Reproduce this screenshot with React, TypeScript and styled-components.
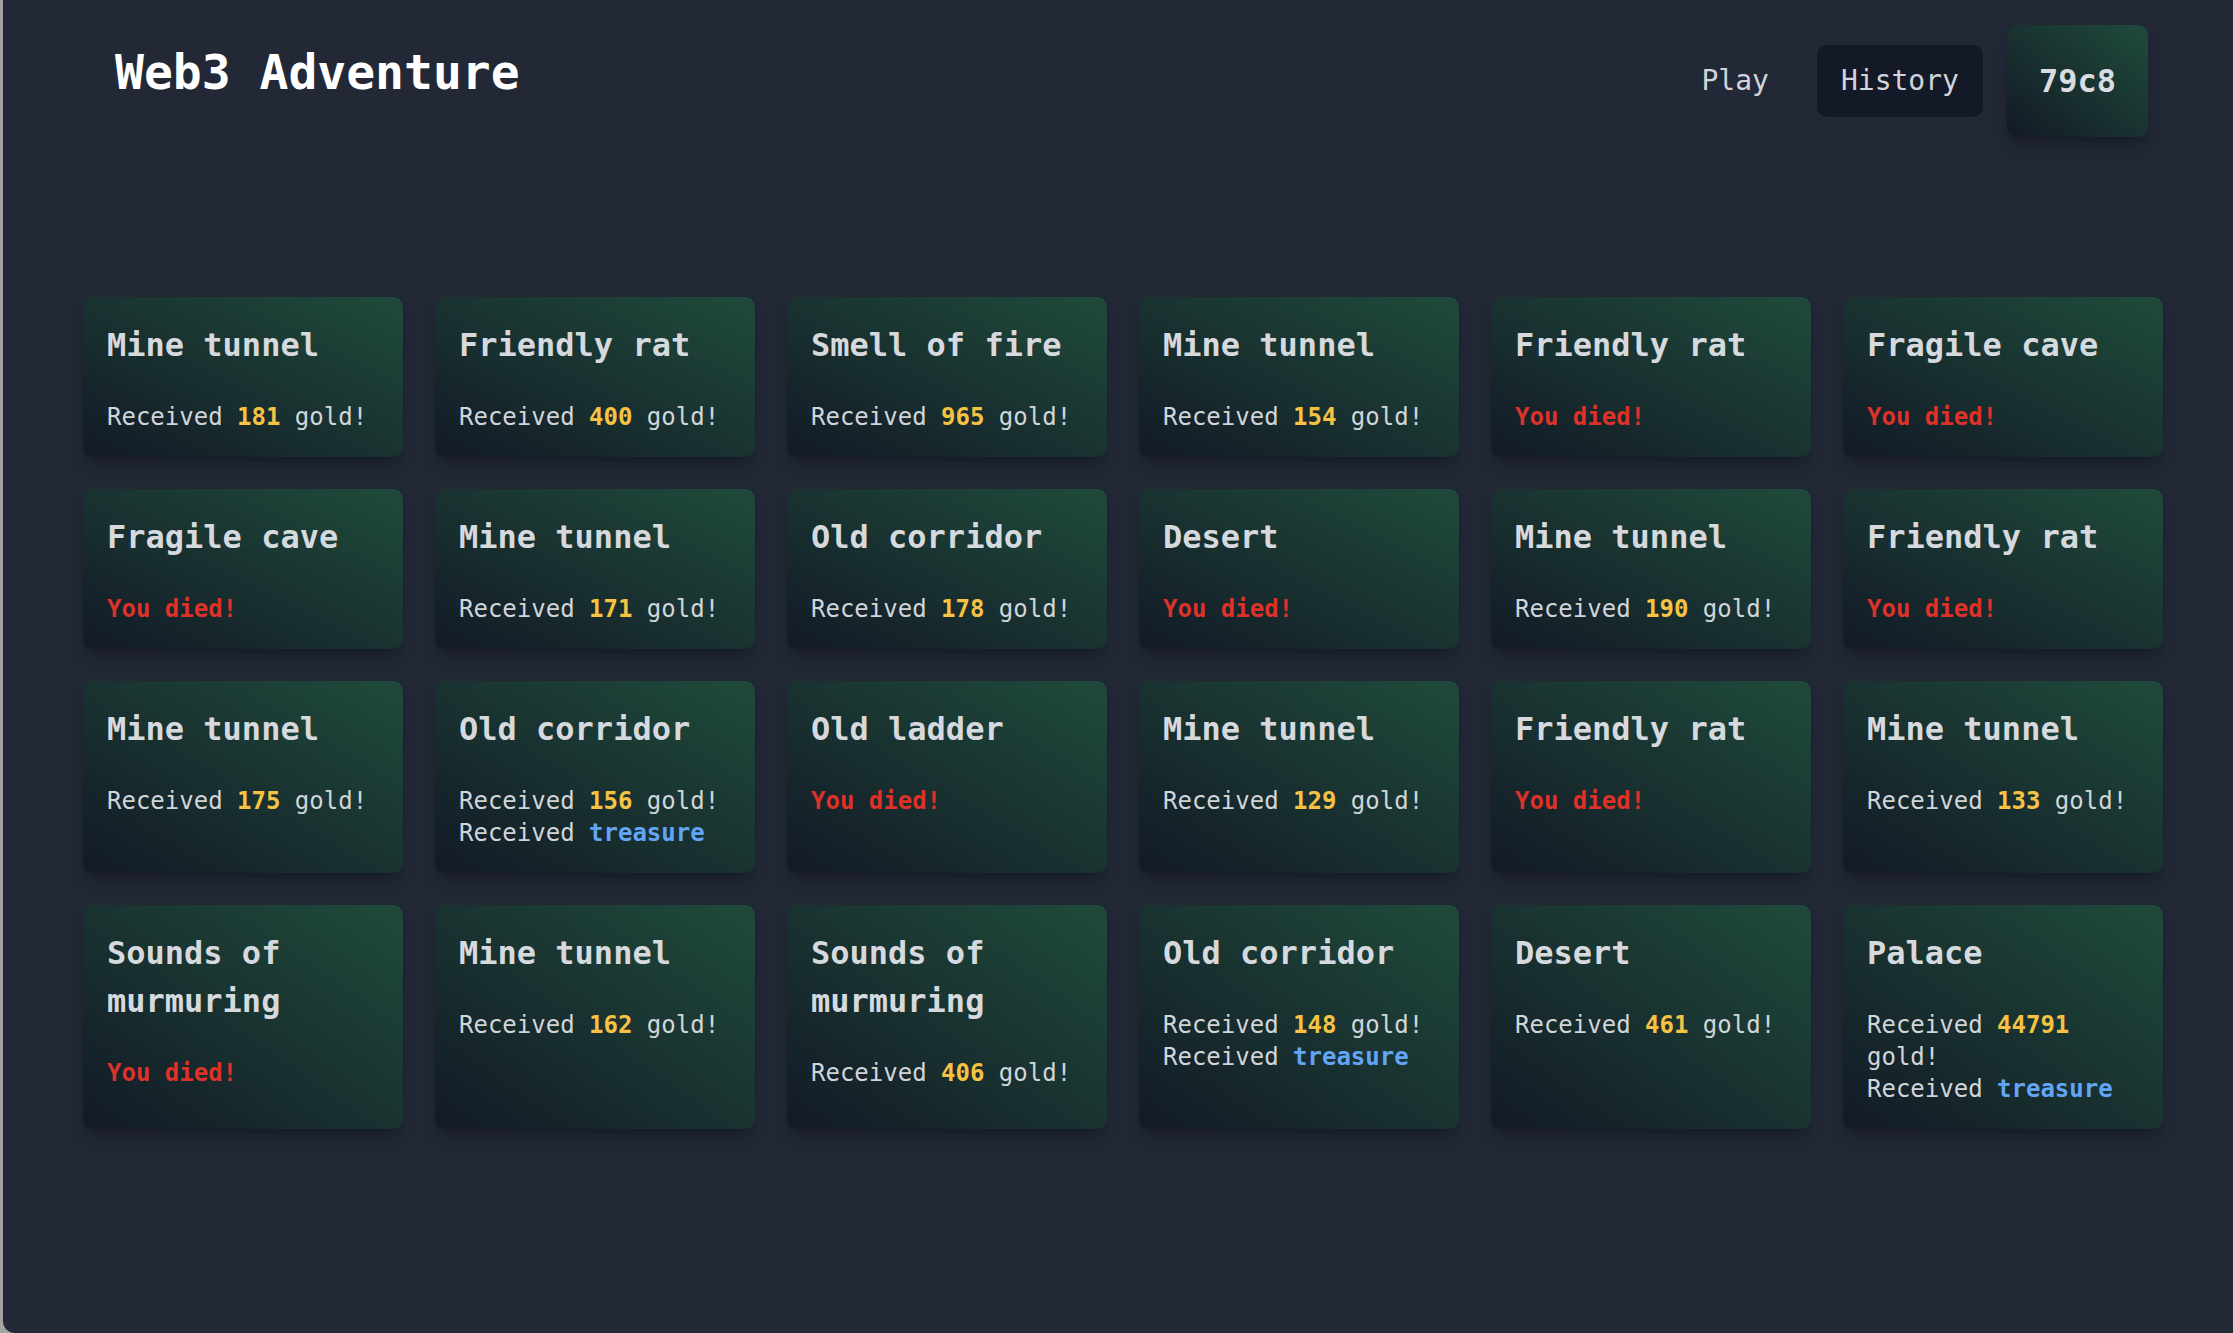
import React from "react";
import styled, { createGlobalStyle } from "styled-components";

const GlobalStyle = createGlobalStyle`
  html, body {
    margin: 0;
    padding: 0;
    background: #a3a3a3;
  }
  body {
    font-family: "DejaVu Sans Mono", "Liberation Mono", monospace;
  }
  * { box-sizing: border-box; }
`;

const Frame = styled.div`
  min-height: 1333px;
  margin-left: 3px;
  background: #222836;
  border-bottom-left-radius: 12px;
  color: #d1d5db;
  padding: 25px 85px 80px 80px;
`;

const Header = styled.header`
  display: flex;
  justify-content: space-between;
  align-items: flex-start;
`;

const Title = styled.h1`
  margin: 19px 0 0 32px;
  font-size: 48px;
  line-height: 1.2;
  font-weight: 700;
  color: #ffffff;
`;

const Nav = styled.nav`
  display: flex;
  align-items: center;
  gap: 24px;
`;

const NavLink = styled.a<{ $active?: boolean }>`
  display: block;
  padding: 15px 24px;
  font-size: 28px;
  line-height: 42px;
  border-radius: 10px;
  color: #d1d5db;
  background: ${(p) => (p.$active ? "#131926" : "transparent")};
  cursor: pointer;
`;

const Account = styled.div`
  padding: 32px;
  font-size: 32px;
  line-height: 48px;
  font-weight: 700;
  color: #d9dce1;
  border-radius: 10px;
  background: linear-gradient(to top right, #131a26, #1f4b3b);
  box-shadow: 0 10px 15px -3px rgba(0, 0, 0, 0.25), 0 4px 6px -4px rgba(0, 0, 0, 0.2);
`;

const Grid = styled.main`
  margin-top: 160px;
  display: grid;
  grid-template-columns: repeat(6, 320px);
  gap: 32px;
`;

const Card = styled.section`
  padding: 24px;
  border-radius: 10px;
  background: linear-gradient(to top right, #131a26, #1f4b3b);
  box-shadow: 0 10px 15px -3px rgba(0, 0, 0, 0.25), 0 4px 6px -4px rgba(0, 0, 0, 0.2);
`;

const CardTitle = styled.h2`
  margin: 0 0 32px;
  font-size: 32px;
  line-height: 48px;
  font-weight: 700;
  color: #d6d9de;
`;

const Line = styled.p`
  margin: 0;
  font-size: 24px;
  line-height: 32px;
  color: #d1d5db;
`;

const Accent = styled.span<{ $tone: "gold" | "dead" | "treasure" }>`
  font-weight: 700;
  color: ${(p) =>
    p.$tone === "gold" ? "#f6c244" : p.$tone === "dead" ? "#dc3228" : "#62a5f6"};
`;

type Entry = { title: string; gold?: number; died?: boolean; treasure?: boolean };

const entries: Entry[] = [
  { title: "Mine tunnel", gold: 181 },
  { title: "Friendly rat", gold: 400 },
  { title: "Smell of fire", gold: 965 },
  { title: "Mine tunnel", gold: 154 },
  { title: "Friendly rat", died: true },
  { title: "Fragile cave", died: true },
  { title: "Fragile cave", died: true },
  { title: "Mine tunnel", gold: 171 },
  { title: "Old corridor", gold: 178 },
  { title: "Desert", died: true },
  { title: "Mine tunnel", gold: 190 },
  { title: "Friendly rat", died: true },
  { title: "Mine tunnel", gold: 175 },
  { title: "Old corridor", gold: 156, treasure: true },
  { title: "Old ladder", died: true },
  { title: "Mine tunnel", gold: 129 },
  { title: "Friendly rat", died: true },
  { title: "Mine tunnel", gold: 133 },
  { title: "Sounds of murmuring", died: true },
  { title: "Mine tunnel", gold: 162 },
  { title: "Sounds of murmuring", gold: 406 },
  { title: "Old corridor", gold: 148, treasure: true },
  { title: "Desert", gold: 461 },
  { title: "Palace", gold: 44791, treasure: true },
];

export default function App() {
  return (
    <>
      <GlobalStyle />
      <Frame>
        <Header>
          <Title>Web3 Adventure</Title>
          <Nav>
            <NavLink>Play</NavLink>
            <NavLink $active>History</NavLink>
            <Account>79c8</Account>
          </Nav>
        </Header>
        <Grid>
          {entries.map((e, i) => (
            <Card key={i}>
              <CardTitle>{e.title}</CardTitle>
              {e.died && (
                <Line>
                  <Accent $tone="dead">You died!</Accent>
                </Line>
              )}
              {e.gold !== undefined && (
                <Line>
                  Received <Accent $tone="gold">{e.gold}</Accent> gold!
                </Line>
              )}
              {e.treasure && (
                <Line>
                  Received <Accent $tone="treasure">treasure</Accent>
                </Line>
              )}
            </Card>
          ))}
        </Grid>
      </Frame>
    </>
  );
}
